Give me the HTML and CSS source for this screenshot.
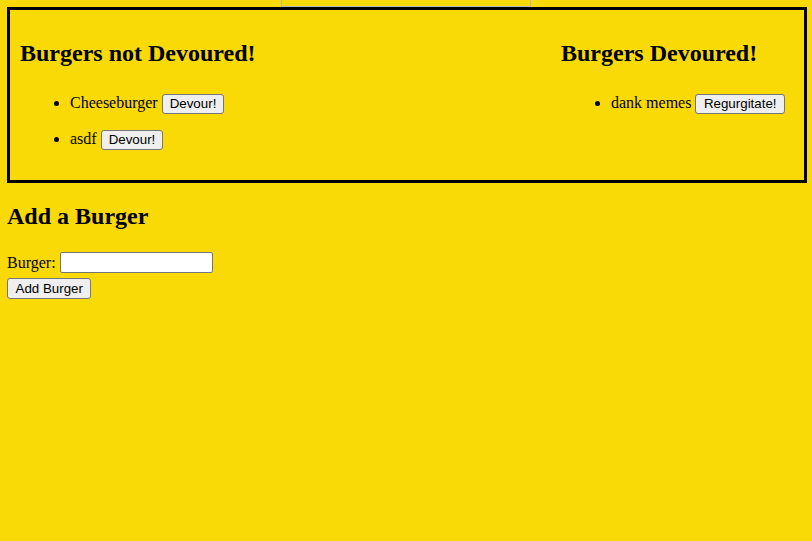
FILE: index.html
```html
<!DOCTYPE html>
<html lang="en">
<head>
<meta charset="utf-8">
<title>Burgers</title>
<link rel="stylesheet" href="styles.css">
</head>
<body>
<div class="banner"></div>
<div class="board">
  <section class="col col-left">
    <h2 class="col-title">Burgers not Devoured!</h2>
    <ul class="burger-list">
      <li class="burger-item">Cheeseburger <button class="btn">Devour!</button></li>
      <li class="burger-item">asdf <button class="btn">Devour!</button></li>
    </ul>
  </section>
  <section class="col col-right">
    <h2 class="col-title">Burgers Devoured!</h2>
    <ul class="burger-list">
      <li class="burger-item">dank memes <button class="btn btn-wide">Regurgitate!</button></li>
    </ul>
  </section>
</div>
<div class="add">
  <h2 class="add-title">Add a Burger</h2>
  <form class="add-form">
    <div class="field"><label class="field-label" for="burger">Burger:</label> <input class="field-input" id="burger" type="text"></div>
    <button class="btn btn-add" type="button">Add Burger</button>
  </form>
</div>
</body>
</html>
```

FILE: styles.css
```css
html, body {
  margin: 0;
  padding: 0;
}
body {
  background: #f9d906;
  color: #000;
  font-family: "Liberation Serif", "Times New Roman", serif;
  font-size: 16px;
  min-height: 541px;
}
.banner {
  width: 250px;
  height: 7px;
  margin: 0 auto;
  box-sizing: border-box;
  border: 1px solid #b8b8b8;
  border-top: 0;
}
.board {
  margin: 0 5px 0 7px;
  border: 3px solid #000;
  padding: 10px 10px 0 10px;
  display: flex;
  justify-content: space-between;
}
.col-right {
  width: 233px;
}
.col-title {
  font-size: 24px;
  font-weight: bold;
  margin: 20px 0 0 0;
  line-height: 27px;
}
.burger-list {
  margin: 0;
  padding: 0 0 0 50px;
  padding-top: 26px;
  padding-bottom: 31px;
}
.burger-item {
  line-height: 20px;
  height: 20px;
  margin-bottom: 16px;
}
.burger-item:last-child {
  margin-bottom: 0;
}
.btn {
  font-family: "Liberation Sans", Arial, sans-serif;
  font-size: 13.33px;
  background: #efefef;
  color: #000;
  border: 1px solid #767676;
  border-radius: 3px;
  padding: 1px 7px;
  height: 20px;
  line-height: 16px;
  box-sizing: border-box;
  vertical-align: baseline;
}
.btn-wide {
  padding: 1px 7.5px;
}
.add {
  padding: 0 7px;
}
.add-title {
  font-size: 24px;
  font-weight: bold;
  margin: 20px 0 0 0;
  line-height: 27px;
}
.add-form {
  margin-top: 22px;
}
.field {
  height: 21px;
  line-height: 21px;
  margin-bottom: 5px;
}
.field-input {
  width: 153px;
  height: 21px;
  box-sizing: border-box;
  border: 1px solid #767676;
  border-radius: 2px;
  background: #fff;
  padding: 1px 2px;
  font-family: "Liberation Sans", Arial, sans-serif;
  font-size: 13.33px;
  vertical-align: bottom;
}
.btn-add {
  height: 21px;
  display: block;
  padding: 1px 7.5px;
}
```
